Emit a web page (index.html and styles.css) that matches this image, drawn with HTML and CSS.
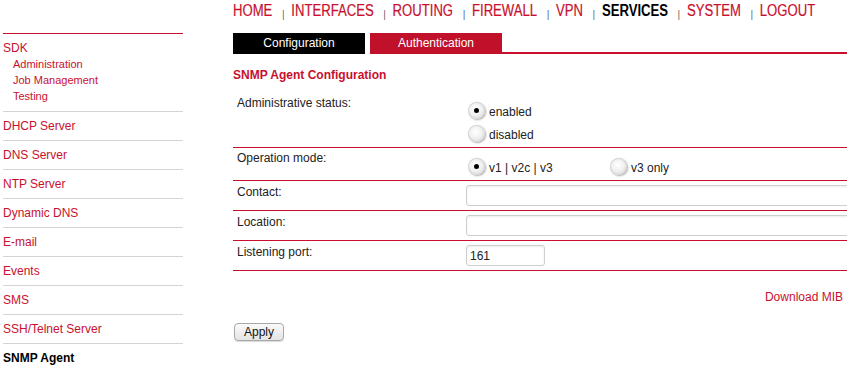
FILE: index.html
```html
<!DOCTYPE html>
<html lang="en">

<head>
    <meta charset="UTF-8">
    <title>SNMP Agent</title>
    <link rel="stylesheet" href="styles.css">
</head>

<body>
    <div id="menu">
        <div class="group">
            <a class="item" href="#">SDK</a>
            <a class="sub" href="#">Administration</a>
            <a class="sub" href="#">Job Management</a>
            <a class="sub" href="#">Testing</a>
        </div>
        <a class="entry" href="#">DHCP Server</a>
        <a class="entry" href="#">DNS Server</a>
        <a class="entry" href="#">NTP Server</a>
        <a class="entry" href="#">Dynamic DNS</a>
        <a class="entry" href="#">E-mail</a>
        <a class="entry" href="#">Events</a>
        <a class="entry" href="#">SMS</a>
        <a class="entry" href="#">SSH/Telnet Server</a>
        <a class="entry active" href="#">SNMP Agent</a>
    </div>

    <div id="main">
        <div class="nav">
            <a href="#">HOME</a><span class="sep">|</span>
            <a href="#">INTERFACES</a><span class="sep">|</span>
            <a href="#">ROUTING</a><span class="sep">|</span>
            <a href="#">FIREWALL</a><span class="sep">|</span>
            <a href="#">VPN</a><span class="sep">|</span>
            <a href="#" class="current">SERVICES</a><span class="sep">|</span>
            <a href="#">SYSTEM</a><span class="sep">|</span>
            <a href="#">LOGOUT</a>
        </div>

        <div class="tabs">
            <a class="tab black" href="#">Configuration</a>
            <a class="tab red" href="#">Authentication</a>
            <div class="tab-rest"></div>
        </div>

        <h1>SNMP Agent Configuration</h1>

        <form class="form">
            <div class="row first">
                <div class="label">Administrative status:</div>
                <div class="field stack">
                    <label class="opt"><input type="radio" name="status" checked><span>enabled</span></label>
                    <label class="opt"><input type="radio" name="status"><span>disabled</span></label>
                </div>
            </div>
            <div class="row second">
                <div class="label">Operation mode:</div>
                <div class="field inline">
                    <label class="opt wide"><input type="radio" name="mode" checked><span>v1 | v2c | v3</span></label>
                    <label class="opt"><input type="radio" name="mode"><span>v3 only</span></label>
                </div>
            </div>
            <div class="row text">
                <div class="label">Contact:</div>
                <div class="field"><input type="text" class="long"></div>
            </div>
            <div class="row text">
                <div class="label">Location:</div>
                <div class="field"><input type="text" class="long"></div>
            </div>
            <div class="row text">
                <div class="label">Listening port:</div>
                <div class="field"><input type="text" class="short" value="161"></div>
            </div>
        </form>

        <div class="download"><a href="#">Download MIB</a></div>

        <button class="apply" type="button">Apply</button>
    </div>
</body>

</html>
```

FILE: styles.css
```css
body {
    margin: 0;
    display: flex;
    overflow: hidden;
    font-family: "Liberation Sans", Arial, sans-serif;
    font-size: 12px;
    color: #222;
}

a {
    text-decoration: none;
    color: #c8102e;
}

/* left menu */
#menu {
    width: 180px;
    margin-left: 3px;
    margin-top: 33px;
    border-top: 1px solid #c8102e;
    flex-shrink: 0;
}

#menu a {
    display: block;
    line-height: 16px;
}

.group {
    padding: 6px 0 7px;
}

.group .sub {
    font-size: 11px;
    padding-left: 10px;
}

.entry {
    border-top: 1px solid #d3d3da;
    padding: 6px 0;
}

#menu .active {
    color: #000;
    font-weight: bold;
}

/* main column */
#main {
    width: 614px;
    margin-left: 50px;
    flex-shrink: 0;
}

/* no narrow face installed, so squeeze the regular one */
.nav {
    height: 33px;
    line-height: 22px;
    font-size: 16px;
    white-space: nowrap;
    transform: scaleX(0.82);
    transform-origin: left top;
    -webkit-text-stroke: 0.2px #c8102e;
}

.nav .current {
    color: #000;
    font-weight: bold;
    -webkit-text-stroke: 0;
}

.sep {
    font-size: 10px;
    color: #444;
    margin: 0 4px 0 12px;
    position: relative;
    top: 2px;
    -webkit-text-stroke: 0;
}

.tabs {
    display: flex;
    height: 21px;
}

.tab {
    width: 132px;
    text-align: center;
    color: #fff;
    line-height: 20px;
}

.tab.black {
    background: #000;
    color: #fff;
}

.tab.red {
    background: #c0102a;
    color: #fff;
    margin-left: 5px;
}

.tab-rest {
    flex: 1;
    border-bottom: 2px solid #c8102e;
    box-sizing: border-box;
}

h1 {
    margin: 13px 0 0;
    font-size: 12px;
    line-height: 16px;
    color: #c8102e;
}

/* form table */
.form {
    margin-top: 9px;
}

.row {
    display: flex;
    border-bottom: 1px solid #c8102e;
}

.label {
    width: 229px;
    padding-left: 4px;
    line-height: 16px;
    flex-shrink: 0;
}

.field {
    flex: 1;
    overflow: hidden;
}

.row.first .label {
    padding-top: 3px;
}

.row.first .field {
    padding-top: 9px;
}

.row.second .label {
    padding-top: 2px;
}

.row.second .field {
    padding-top: 9px;
}

.row.text .label {
    padding-top: 3px;
}

.row.text .field {
    padding: 4px 0;
    height: 21px;
}

.inline {
    display: flex;
}

.opt {
    height: 23px;
    display: flex;
    font-size: 12px;
}

.opt.wide {
    width: 142px;
}

.opt span {
    margin-top: 3px;
    line-height: 16px;
    padding-left: 4px;
}

input[type='radio'] {
    appearance: none;
    -webkit-appearance: none;
    width: 17px;
    height: 17px;
    margin: 1px 0 0 2px;
    border-radius: 50%;
    background: radial-gradient(circle at 45% 40%, #fff 0%, #f0f0f0 45%, #cfcfcf 100%);
    box-shadow: 1px 1px 2px rgba(0, 0, 0, 0.35), inset 0 0 0 1px #d6d6d6;
    position: relative;
}

input[type='radio']:checked::after {
    content: "";
    position: absolute;
    left: 6px;
    top: 6px;
    width: 5px;
    height: 5px;
    border-radius: 50%;
    background: #000;
}

input[type='text'] {
    box-sizing: border-box;
    height: 21px;
    margin: 0;
    border: 1px solid #cfcfcf;
    border-radius: 3px;
    box-shadow: inset 0 1px 2px rgba(0, 0, 0, 0.08);
    font-family: "Liberation Sans", Arial, sans-serif;
    font-size: 12px;
    color: #222;
    padding: 0 3px;
}

input.long {
    width: 400px;
}

input.short {
    width: 79px;
}

.download {
    text-align: right;
    margin-top: 18px;
    padding-right: 4px;
    line-height: 16px;
}

.apply {
    margin: 18px 0 0 1px;
    height: 18px;
    padding: 0 9px;
    font-family: "Liberation Sans", Arial, sans-serif;
    font-size: 12px;
    color: #111;
    border: 1px solid #a8a8a8;
    border-radius: 4px;
    background: linear-gradient(#fafafa, #e4e4e4);
    box-shadow: 0 1px 1px rgba(0, 0, 0, 0.15);
}
```
